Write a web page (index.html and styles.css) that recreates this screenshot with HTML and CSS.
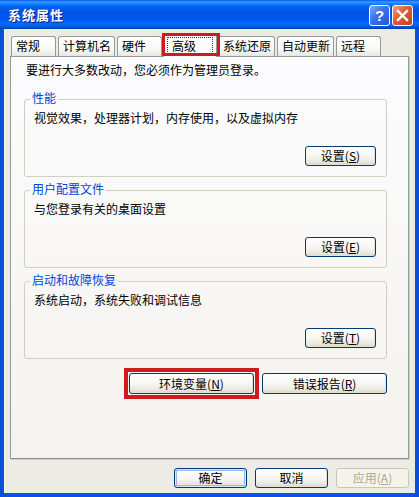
FILE: index.html
```html
<!DOCTYPE html>
<html lang="zh-CN">
<head>
<meta charset="utf-8">
<title>系统属性</title>
<link rel="stylesheet" href="styles.css">
</head>
<body>
<div class="window">
  <div class="titlebar">
    <span class="title">系统属性</span>
    <div class="caption-btns">
      <span class="cbtn help">?</span>
      <span class="cbtn close"><svg width="13" height="13" viewBox="0 0 13 13"><path d="M2 2 L11 11 M11 2 L2 11" stroke="#fff" stroke-width="2.4" stroke-linecap="square"/></svg></span>
    </div>
  </div>
  <div class="client">
    <div class="tabs">
      <span class="tab">常规</span>
      <span class="tab">计算机名</span>
      <span class="tab">硬件</span>
      <span class="tab selected"><span class="focus">高级</span><span class="mark mark-tab"></span></span>
      <span class="tab">系统还原</span>
      <span class="tab">自动更新</span>
      <span class="tab">远程</span>
    </div>
    <div class="panel">
      <p class="intro">要进行大多数改动，您必须作为管理员登录。</p>
      <fieldset class="group">
        <legend>性能</legend>
        <p class="desc">视觉效果，处理器计划，内存使用，以及虚拟内存</p>
        <div class="row"><button class="btn small">设置(<u>S</u>)</button></div>
      </fieldset>
      <fieldset class="group">
        <legend>用户配置文件</legend>
        <p class="desc">与您登录有关的桌面设置</p>
        <div class="row"><button class="btn small">设置(<u>E</u>)</button></div>
      </fieldset>
      <fieldset class="group">
        <legend>启动和故障恢复</legend>
        <p class="desc">系统启动，系统失败和调试信息</p>
        <div class="row"><button class="btn small">设置(<u>T</u>)</button></div>
      </fieldset>
      <div class="row actions">
        <div class="marked"><button class="btn wide">环境变量(<u>N</u>)</button><span class="mark mark-btn"></span></div>
        <button class="btn wide">错误报告(<u>R</u>)</button>
      </div>
    </div>
    <div class="footer">
      <button class="btn foot default">确定</button>
      <button class="btn foot">取消</button>
      <button class="btn foot" disabled>应用(<u>A</u>)</button>
    </div>
  </div>
</div>
</body>
</html>
```

FILE: styles.css
```css
* { box-sizing: border-box; }
html, body { margin: 0; padding: 0; }
body {
  width: 419px;
  height: 497px;
  overflow: hidden;
  font-family: "Noto Sans CJK SC", "Noto Sans", sans-serif;
  font-size: 12px;
  color: #000;
  background: #0852DE;
}
.window {
  width: 419px;
  height: 497px;
  display: flex;
  flex-direction: column;
  background: linear-gradient(to right, #0A4FD8, #0655E8 3%, #0655E8 97%, #0A4FD8);
}
.titlebar {
  flex: none;
  height: 29px;
  display: flex;
  align-items: center;
  justify-content: space-between;
  padding: 0 6px 0 8px;
  background: linear-gradient(to bottom, #0058EE 0%, #3593FF 6%, #288EFF 10%, #127DFF 14%, #036FFC 18%, #0262EE 24%, #0057E5 32%, #0054E3 40%, #0055EB 60%, #005BF5 70%, #026AFE 80%, #0062EF 88%, #0052D6 94%, #0040AB 100%);
}
.title {
  color: #fff;
  font-weight: bold;
  font-size: 13px;
  letter-spacing: 1px;
  text-shadow: 1px 1px 0 #0A1A80;
}
.caption-btns { display: flex; gap: 2px; margin-top: 2px; }
.cbtn {
  width: 21px;
  height: 21px;
  border: 1px solid #fff;
  border-radius: 3px;
  display: flex;
  align-items: center;
  justify-content: center;
}
.help {
  background: linear-gradient(135deg, #7EA6F8, #3A70E8 45%, #2257D4);
  color: #fff;
  font-family: "Liberation Sans", sans-serif;
  font-weight: bold;
  font-size: 15px;
  line-height: 1;
}
.close {
  background: linear-gradient(135deg, #F0A186, #DD5A32 45%, #C94120);
}
.client {
  flex: 1;
  margin: 0 4px 4px 4px;
  background: #ECEBE4;
  border-left: 1px solid #F8F8F4;
  display: flex;
  flex-direction: column;
  padding: 4px 6px 0 5px;
}
.tabs {
  display: flex;
  align-items: flex-end;
  gap: 2px;
  padding-left: 1px;
  position: relative;
  z-index: 1;
}
.tab {
  height: 20px;
  min-width: 45px;
  padding: 0 3px 0 4px;
  line-height: 18px;
  border: 1px solid #919B9C;
  border-bottom: none;
  border-radius: 3px 3px 0 0;
  background: linear-gradient(#FFFFFF, #FAFAF9 50%, #F0F0EA 85%, #E6E5DE);
  white-space: nowrap;
}
.tab.selected {
  position: relative;
  height: 24px;
  min-width: 53px;
  margin: 0 -1px -1px -1px;
  padding: 2px 3px 0 3px;
  background: #FCFCFC;
  border-top: 2px solid #F4B24A;
}
.focus {
  display: block;
  height: 17px;
  line-height: 15px;
  padding: 0 16px 0 4px;
  border: 1px dotted #333;
}
.mark {
  position: absolute;
  border-style: solid;
  border-color: #CF1A1F;
  pointer-events: none;
}
.mark-tab {
  top: -2px;
  left: -2px;
  right: -4px;
  bottom: 1px;
  border-width: 3px;
}
.panel {
  flex: none;
  height: 403px;
  border: 1px solid #919B9C;
  border-bottom-color: #8A8F90;
  box-shadow: 1px 1px 0 #D2D0C6;
  background: linear-gradient(#FCFCFE, #F4F3EE);
  padding: 6px 21px 0 13px;
}
.intro {
  margin: 0;
  line-height: 14px;
  padding-left: 2px;
}
.group {
  margin: 14px 0 0 0;
  padding: 4px 10px 10px 9px;
  border: 1px solid #D0D0BF;
  border-radius: 3px;
  min-inline-size: 0;
}
.group + .group { margin-top: 5px; }
.group legend {
  margin-left: -4px;
  padding: 0 2px 2px 2px;
  line-height: 14px;
  color: #0046D5;
}
.desc {
  margin: 0;
  line-height: 14px;
}
.row {
  display: flex;
  justify-content: flex-end;
}
.group .row { margin-top: 21px; }
.actions {
  margin-top: 14px;
  gap: 8px;
}
.btn {
  font-family: inherit;
  font-size: 12px;
  color: #000;
  height: 20px;
  padding: 0;
  line-height: 18px;
  border: 1px solid #003C74;
  border-radius: 3px;
  background: linear-gradient(#FFFFFF, #F6F5F1 55%, #E8E6DD 85%, #D6D0C5);
  box-shadow: inset -1px -1px 0 #E3E0D5;
}
.btn u { text-decoration: underline; }
.small { width: 71px; }
.wide { width: 125px; height: 21px; }
.marked { position: relative; }
.mark-btn {
  top: -5px;
  left: -5px;
  right: -5px;
  bottom: -5px;
  border-width: 4px;
}
.footer {
  display: flex;
  justify-content: flex-end;
  gap: 8px;
  padding-top: 9px;
}
.foot { width: 73px; }
.default {
  box-shadow: inset 0 0 0 1px #CEE7FF, inset 0 0 0 2px #98B8EA;
}
.btn:disabled {
  color: #ACA899;
  border-color: #C9C7BA;
  background: #F5F4EA;
  box-shadow: none;
}
```
